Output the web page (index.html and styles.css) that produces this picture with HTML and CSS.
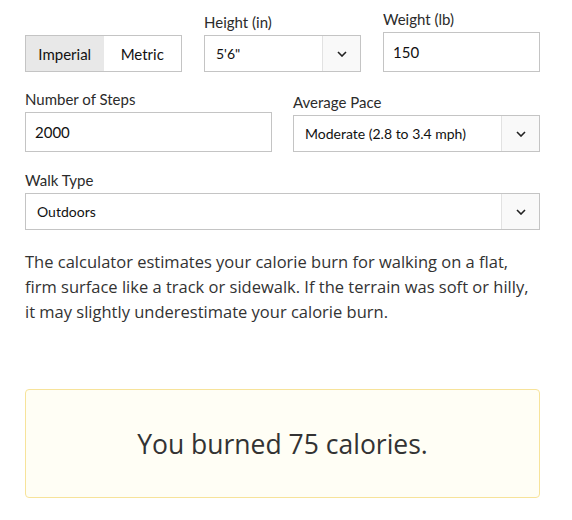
FILE: index.html
```html
<!DOCTYPE html>
<html lang="en">
<head>
  <meta charset="UTF-8">
  <title>Walking Calorie Calculator</title>
  <link rel="stylesheet" href="styles.css">
</head>
<body>

<div class="calc">
  <div class="row row-3">
    <div class="field">
      <div class="toggle">
        <div class="toggle-opt active">Imperial</div>
        <div class="toggle-opt">Metric</div>
      </div>
    </div>
    <div class="field">
      <label>Height (in)</label>
      <div class="select">
        <span class="select-value">5'6"</span>
        <span class="select-arrow"><svg width="10" height="6" viewBox="0 0 10 6"><path d="M1 1l4 4 4-4" fill="none" stroke="#222" stroke-width="1.6"/></svg></span>
      </div>
    </div>
    <div class="field">
      <label>Weight (lb)</label>
      <div class="input">150</div>
    </div>
  </div>

  <div class="row row-2">
    <div class="field">
      <label>Number of Steps</label>
      <div class="input">2000</div>
    </div>
    <div class="field">
      <label>Average Pace</label>
      <div class="select">
        <span class="select-value">Moderate (2.8 to 3.4 mph)</span>
        <span class="select-arrow"><svg width="10" height="6" viewBox="0 0 10 6"><path d="M1 1l4 4 4-4" fill="none" stroke="#222" stroke-width="1.6"/></svg></span>
      </div>
    </div>
  </div>

  <div class="row">
    <div class="field">
      <label>Walk Type</label>
      <div class="select">
        <span class="select-value">Outdoors</span>
        <span class="select-arrow"><svg width="10" height="6" viewBox="0 0 10 6"><path d="M1 1l4 4 4-4" fill="none" stroke="#222" stroke-width="1.6"/></svg></span>
      </div>
    </div>
  </div>

  <p class="note">The calculator estimates your calorie burn for walking on a flat, firm surface like a track or sidewalk. If the terrain was soft or hilly, it may slightly underestimate your calorie burn.</p>

  <div class="result">You burned 75 calories.</div>
</div>

</body>
</html>
```

FILE: styles.css
```css
body {
  margin: 0;
  font-family: Lato, "Open Sans", sans-serif;
  color: #333;
  background-color: #fff;
}

.calc {
  width: 515px;
  margin-left: 25px;
  padding-top: 10px;
}

.row {
  display: grid;
  grid-template-columns: 1fr;
  align-items: end;
  column-gap: 21px;
  margin-bottom: 18px;
}

.row-3 {
  grid-template-columns: 157px 157px 1fr;
  column-gap: 22px;
}

.row-2 {
  grid-template-columns: 1fr 1fr;
  margin-bottom: 19px;
}

.field {
  display: flex;
  flex-direction: column;
}

.field label {
  font-size: 15px;
  line-height: 18px;
  margin-bottom: 4px;
  color: #2b2b2b;
}

.toggle {
  display: flex;
  height: 37px;
  box-sizing: border-box;
  border: 1px solid #c4c4c4;
}

.toggle-opt {
  flex: 1;
  display: flex;
  align-items: center;
  justify-content: center;
  font-size: 15px;
  color: #111;
}

.toggle-opt.active {
  background-color: #e8e8e8;
}

.input {
  height: 40px;
  box-sizing: border-box;
  border: 1px solid #c4c4c4;
  padding: 0 9px;
  display: flex;
  align-items: center;
  font-size: 15px;
  color: #111;
}

.select {
  height: 37px;
  box-sizing: border-box;
  border: 1px solid #c4c4c4;
  display: flex;
  align-items: stretch;
  font-size: 14px;
  color: #111;
}

.select-value {
  flex: 1;
  display: flex;
  align-items: center;
  padding-left: 11px;
}

.select-arrow {
  width: 37px;
  border-left: 1px solid #e2e2e2;
  background-color: #f9f9f9;
  display: flex;
  align-items: center;
  justify-content: center;
}

.note {
  margin: 19px 0 0;
  font-family: "Open Sans", sans-serif;
  font-size: 16.5px;
  line-height: 25px;
  color: #333;
}

.result {
  margin-top: 65px;
  height: 109px;
  box-sizing: border-box;
  border: 1px solid #f7e39a;
  border-radius: 4px;
  background-color: #fffef5;
  display: flex;
  align-items: center;
  justify-content: center;
  font-family: "Open Sans", sans-serif;
  font-size: 26.5px;
  color: #333;
}
```
